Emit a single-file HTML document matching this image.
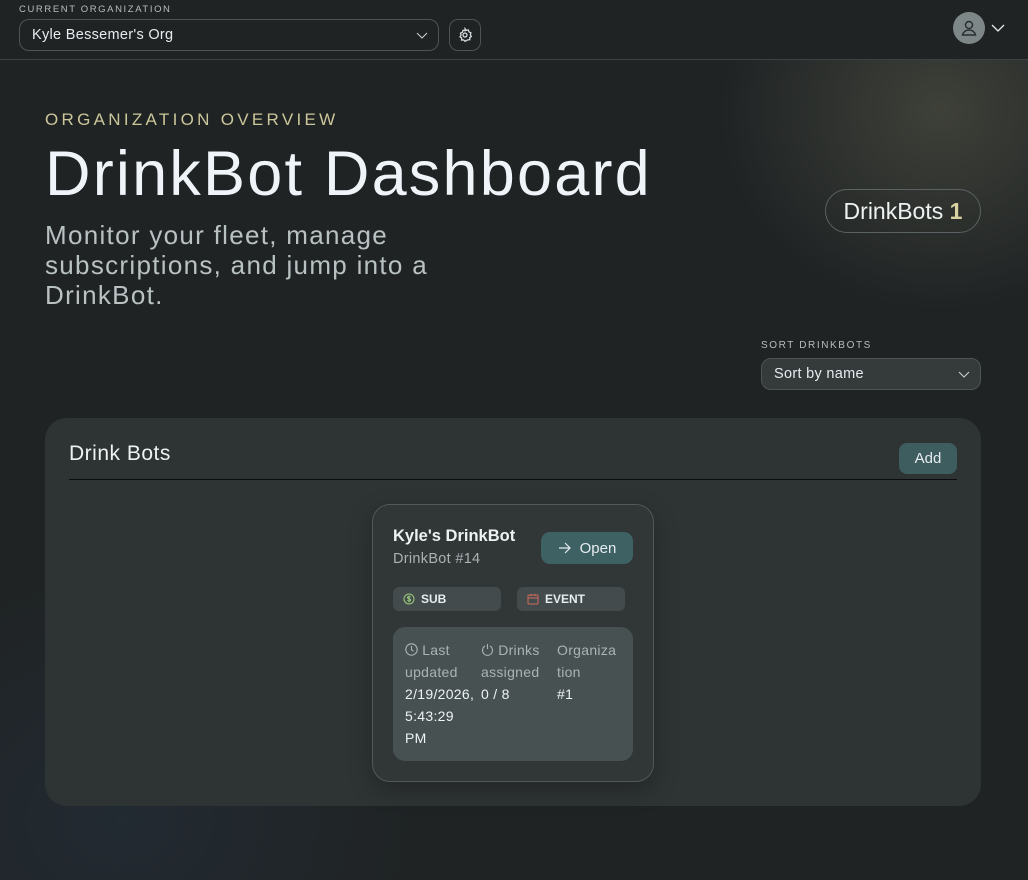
<!DOCTYPE html>
<html><head><style>
*{box-sizing:border-box;margin:0;padding:0}
body{width:1028px;height:880px;overflow:hidden;font-family:"Liberation Sans","DejaVu Sans",sans-serif;color:#e6ecef;
background:radial-gradient(ellipse 220px 200px at 940px 110px,rgba(120,120,95,.35),rgba(0,0,0,0) 100%),radial-gradient(ellipse 300px 250px at 120px 820px,rgba(40,55,75,.35),rgba(0,0,0,0) 100%),#1f2324;position:relative}
.top{position:absolute;left:0;top:0;width:1028px;height:60px;border-bottom:1px solid #3c4244;background:#1f2324}
.lbl{position:absolute;font-size:9.5px;letter-spacing:1.6px;color:#b7bec0}
.sel{position:absolute;border:1px solid #4c5456;border-radius:10px;font-size:14.5px;color:#e6ecef;padding-left:12px;display:flex;align-items:center;letter-spacing:0.3px}
.chev{position:absolute;right:10px;top:50%;margin-top:-5px}
.abs{position:absolute}
.k{font-size:14px;line-height:22px;color:#aab4b5;letter-spacing:0.3px}
</style></head><body>
<div class="top"></div>
<div class="lbl" style="left:19px;top:4px">CURRENT ORGANIZATION</div>
<div class="sel" style="left:19px;top:19px;width:420px;height:32px">Kyle Bessemer's Org
<svg class="chev" width="12" height="10" viewBox="0 0 12 10"><path d="M1 3l5 5 5-5" stroke="#cfd5d7" fill="none" stroke-width="1"/></svg></div>
<div class="abs" style="left:449px;top:19px;width:32px;height:32px;border:1px solid #4c5456;border-radius:9px"></div>
<svg class="abs" style="left:457px;top:27px" width="16" height="16" viewBox="0 0 24 24" fill="none" stroke="#dfe5e7" stroke-width="1.8"><circle cx="12" cy="12" r="3"/><path d="M12 2.5l2 2.5 3.1-.6.9 3 2.9 1.3-.9 3 1.6 2.6-2.6 1.6.3 3.1-3.1.3L12 21.5l-2.1-2.2-3.1.3.3-3.1-2.6-1.6 1.6-2.6-.9-3 2.9-1.3.9-3 3.1.6z"/></svg>
<div class="abs" style="left:953px;top:12px;width:32px;height:32px;border-radius:50%;background:#7e8788"></div>
<svg class="abs" style="left:959px;top:18px" width="20" height="20" viewBox="0 0 20 20" fill="none" stroke="#2a2f30" stroke-width="1.5"><circle cx="10" cy="7" r="3.5"/><path d="M3.5 17c1-3.5 3.5-5 6.5-5s5.5 1.5 6.5 5z"/></svg>
<svg class="abs" style="left:991px;top:22px" width="14" height="12" viewBox="0 0 14 12"><path d="M1 3l6 6 6-6" stroke="#e6ecef" fill="none" stroke-width="1.3"/></svg>

<div class="abs" style="left:45px;top:110px;font-size:17px;letter-spacing:3.3px;color:#cbc79a">ORGANIZATION OVERVIEW</div>
<div class="abs" style="left:45px;top:138px;font-size:63px;color:#eef4f8;letter-spacing:2.2px;white-space:nowrap">DrinkBot Dashboard</div>
<div class="abs" style="left:45px;top:220px;width:430px;font-size:26px;line-height:30px;color:#b9c1c3;letter-spacing:1.3px">Monitor your fleet, manage subscriptions, and jump into a DrinkBot.</div>
<div class="abs" style="left:825px;top:189px;width:156px;height:44px;border:1px solid #5a6263;border-radius:22px;font-size:23px;display:flex;align-items:center;justify-content:center;color:#eef2f3">DrinkBots&nbsp;<span style="color:#d8d3a2;font-weight:bold">1</span></div>

<div class="lbl" style="left:761px;top:340px;font-size:10px">SORT DRINKBOTS</div>
<div class="sel" style="left:761px;top:358px;width:220px;height:32px;background:#353a3b;font-size:14.5px">Sort by name
<svg class="chev" width="12" height="10" viewBox="0 0 12 10"><path d="M1 3l5 5 5-5" stroke="#cfd5d7" fill="none" stroke-width="1"/></svg></div>

<div class="abs" style="left:45px;top:418px;width:936px;height:388px;background:#2e3333;border-radius:22px"></div>
<div class="abs" style="left:69px;top:442px;font-size:21px;color:#eef2f3;letter-spacing:0.5px">Drink Bots</div>
<div class="abs" style="left:899px;top:443px;width:58px;height:31px;background:#3e5d5f;border-radius:8px;font-size:15px;display:flex;align-items:center;justify-content:center">Add</div>
<div class="abs" style="left:69px;top:479px;width:888px;height:1px;background:#0b0d0e"></div>

<div class="abs" style="left:372px;top:504px;width:282px;height:278px;background:#313637;border:1px solid #50585a;border-radius:18px;box-shadow:0 8px 24px rgba(0,0,0,.25)"></div>
<div class="abs" style="left:393px;top:527px;font-size:16.5px;font-weight:bold;color:#eef2f3">Kyle's DrinkBot</div>
<div class="abs" style="left:393px;top:551px;font-size:14.5px;color:#aab2b4;letter-spacing:0.3px">DrinkBot #14</div>
<div class="abs" style="left:541px;top:532px;width:92px;height:32px;background:#3e6164;border-radius:9px;font-size:15px;display:flex;align-items:center;justify-content:center;gap:8px">
<svg width="14" height="12" viewBox="0 0 14 12" fill="none" stroke="#e6ecef" stroke-width="1.2"><path d="M1 6h11M7 1l5 5-5 5"/></svg>Open</div>
<div class="abs" style="left:393px;top:587px;width:108px;height:24px;background:#434b4c;border-radius:6px;font-size:12px;font-weight:bold;display:flex;align-items:center;padding-left:10px;gap:6px">
<svg width="12" height="12" viewBox="0 0 12 12" fill="none" stroke="#9ccc7c" stroke-width="1"><circle cx="6" cy="6" r="5"/><path d="M7.5 4.2c-.4-.5-1-.7-1.5-.7-.9 0-1.5.4-1.5 1.1 0 1.5 3 .8 3 2.4 0 .7-.6 1.1-1.5 1.1-.6 0-1.2-.3-1.6-.8M6 2.6v6.8"/></svg>SUB</div>
<div class="abs" style="left:517px;top:587px;width:108px;height:24px;background:#434b4c;border-radius:6px;font-size:12px;font-weight:bold;display:flex;align-items:center;padding-left:10px;gap:6px">
<svg width="12" height="12" viewBox="0 0 12 12" fill="none" stroke="#d06a5c" stroke-width="1"><rect x="1" y="2" width="10" height="9" rx="1"/><path d="M1 5h10M4 1v2M8 1v2"/></svg>EVENT</div>
<div class="abs" style="left:393px;top:627px;width:240px;height:134px;background:#475152;border-radius:12px"></div>
<div class="abs k" style="left:405px;top:639px;white-space:nowrap"><svg width="13" height="13" viewBox="0 0 13 13" fill="none" stroke="#aab4b5" stroke-width="1.1" style="vertical-align:-1px"><circle cx="6.5" cy="6.5" r="5.7"/><path d="M6.5 3v3.7l2 1.5"/></svg> Last<br>updated<br><span style="color:#eef2f3">2/19/2026,<br>5:43:29<br>PM</span></div>
<div class="abs k" style="left:481px;top:639px;white-space:nowrap"><svg width="13" height="13" viewBox="0 0 13 13" fill="none" stroke="#aab4b5" stroke-width="1.1" style="vertical-align:-1px"><path d="M4 3a5 5 0 1 0 5 0M6.5 1v5"/></svg> Drinks<br>assigned<br><span style="color:#eef2f3">0 / 8</span></div>
<div class="abs k" style="left:557px;top:639px;white-space:nowrap">Organiza<br>tion<br><span style="color:#eef2f3">#1</span></div>
</body></html>
